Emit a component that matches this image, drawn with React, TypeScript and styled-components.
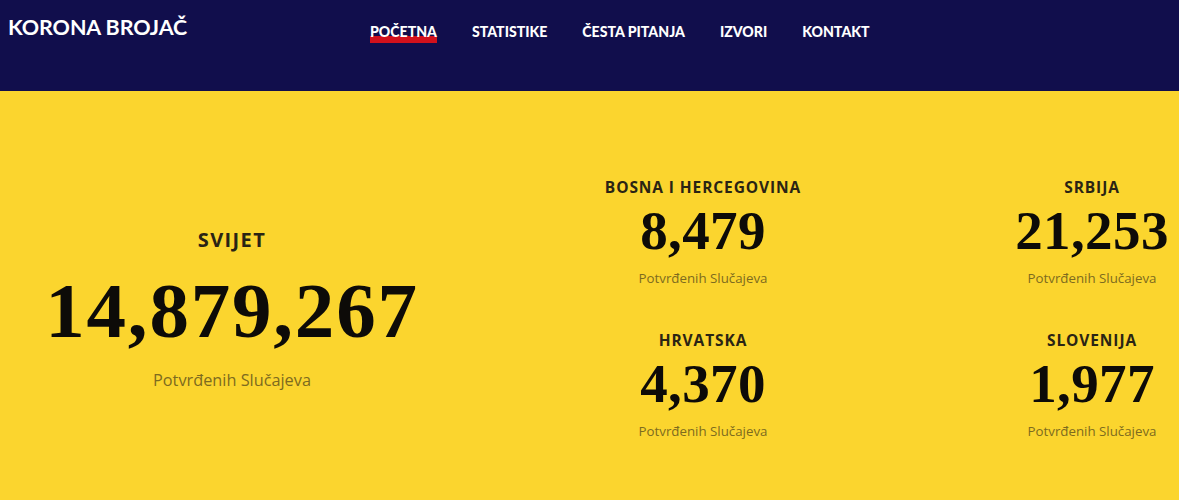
import React from "react";
import styled, { createGlobalStyle } from "styled-components";

const GlobalStyle = createGlobalStyle`
  html, body {
    margin: 0;
    padding: 0;
    background: #fbd52e;
  }
  * {
    box-sizing: border-box;
  }
`;

const Header = styled.header`
  height: 91px;
  background: #110e4c;
  display: flex;
  align-items: flex-start;
  padding: 0 0 0 8px;
`;

const Logo = styled.div`
  width: 362px;
  font-family: Lato, "Noto Sans", sans-serif;
  font-weight: 700;
  font-size: 21.5px;
  color: #ffffff;
  line-height: 1;
  margin-top: 17px;
  letter-spacing: -0.1px;
`;

const Nav = styled.nav`
  display: flex;
  gap: 35px;
  margin-top: 24px;
`;

const NavLink = styled.a<{ $active?: boolean }>`
  position: relative;
  font-family: Lato, "Noto Sans", sans-serif;
  font-weight: 900;
  font-size: 14.1px;
  line-height: 16px;
  color: #ffffff;
  text-decoration: none;
  z-index: 0;

  &::after {
    content: "";
    display: ${(p) => (p.$active ? "block" : "none")};
    position: absolute;
    left: 0;
    right: 0;
    top: 12px;
    height: 7px;
    background: #d2111c;
    z-index: -1;
  }
`;

const Main = styled.main`
  display: grid;
  grid-template-columns: 464px 1fr;
  align-items: center;
  padding-top: 86px;
`;

const Stats = styled.div`
  display: grid;
  grid-template-columns: 478px 174px;
  column-gap: 63px;
  row-gap: 43px;
`;

const Stat = styled.div`
  display: flex;
  flex-direction: column;
  align-items: center;
  text-align: center;
`;

const Label = styled.div<{ $big?: boolean }>`
  font-family: "Open Sans", "Noto Sans", sans-serif;
  font-weight: 700;
  font-size: ${(p) => (p.$big ? "20px" : "15.5px")};
  line-height: ${(p) => (p.$big ? "24px" : "20px")};
  letter-spacing: ${(p) => (p.$big ? "1.4px" : "0.9px")};
  color: #2a2414;
`;

const Count = styled.div<{ $big?: boolean }>`
  font-family: "Liberation Serif", "Times New Roman", serif;
  font-weight: 700;
  font-size: ${(p) => (p.$big ? "79px" : "55px")};
  line-height: ${(p) => (p.$big ? "90px" : "60px")};
  letter-spacing: ${(p) => (p.$big ? "1.8px" : "0.4px")};
  color: #0d0b08;
  margin-top: ${(p) => (p.$big ? "14px" : "4px")};
`;

const Sub = styled.div<{ $big?: boolean }>`
  font-family: "Open Sans", "Noto Sans", sans-serif;
  font-size: ${(p) => (p.$big ? "16.3px" : "13.3px")};
  line-height: 18px;
  color: #7d6b1f;
  margin-top: ${(p) => (p.$big ? "15px" : "8px")};
`;

const countries = [
  { name: "BOSNA I HERCEGOVINA", count: "8,479" },
  { name: "SRBIJA", count: "21,253" },
  { name: "HRVATSKA", count: "4,370" },
  { name: "SLOVENIJA", count: "1,977" },
];

export default function App() {
  return (
    <>
      <GlobalStyle />
      <Header>
        <Logo>KORONA BROJAČ</Logo>
        <Nav>
          <NavLink $active>POČETNA</NavLink>
          <NavLink>STATISTIKE</NavLink>
          <NavLink>ČESTA PITANJA</NavLink>
          <NavLink>IZVORI</NavLink>
          <NavLink>KONTAKT</NavLink>
        </Nav>
      </Header>
      <Main>
        <Stat>
          <Label $big>SVIJET</Label>
          <Count $big>14,879,267</Count>
          <Sub $big>Potvrđenih Slučajeva</Sub>
        </Stat>
        <Stats>
          {countries.map((c) => (
            <Stat key={c.name}>
              <Label>{c.name}</Label>
              <Count>{c.count}</Count>
              <Sub>Potvrđenih Slučajeva</Sub>
            </Stat>
          ))}
        </Stats>
      </Main>
    </>
  );
}
